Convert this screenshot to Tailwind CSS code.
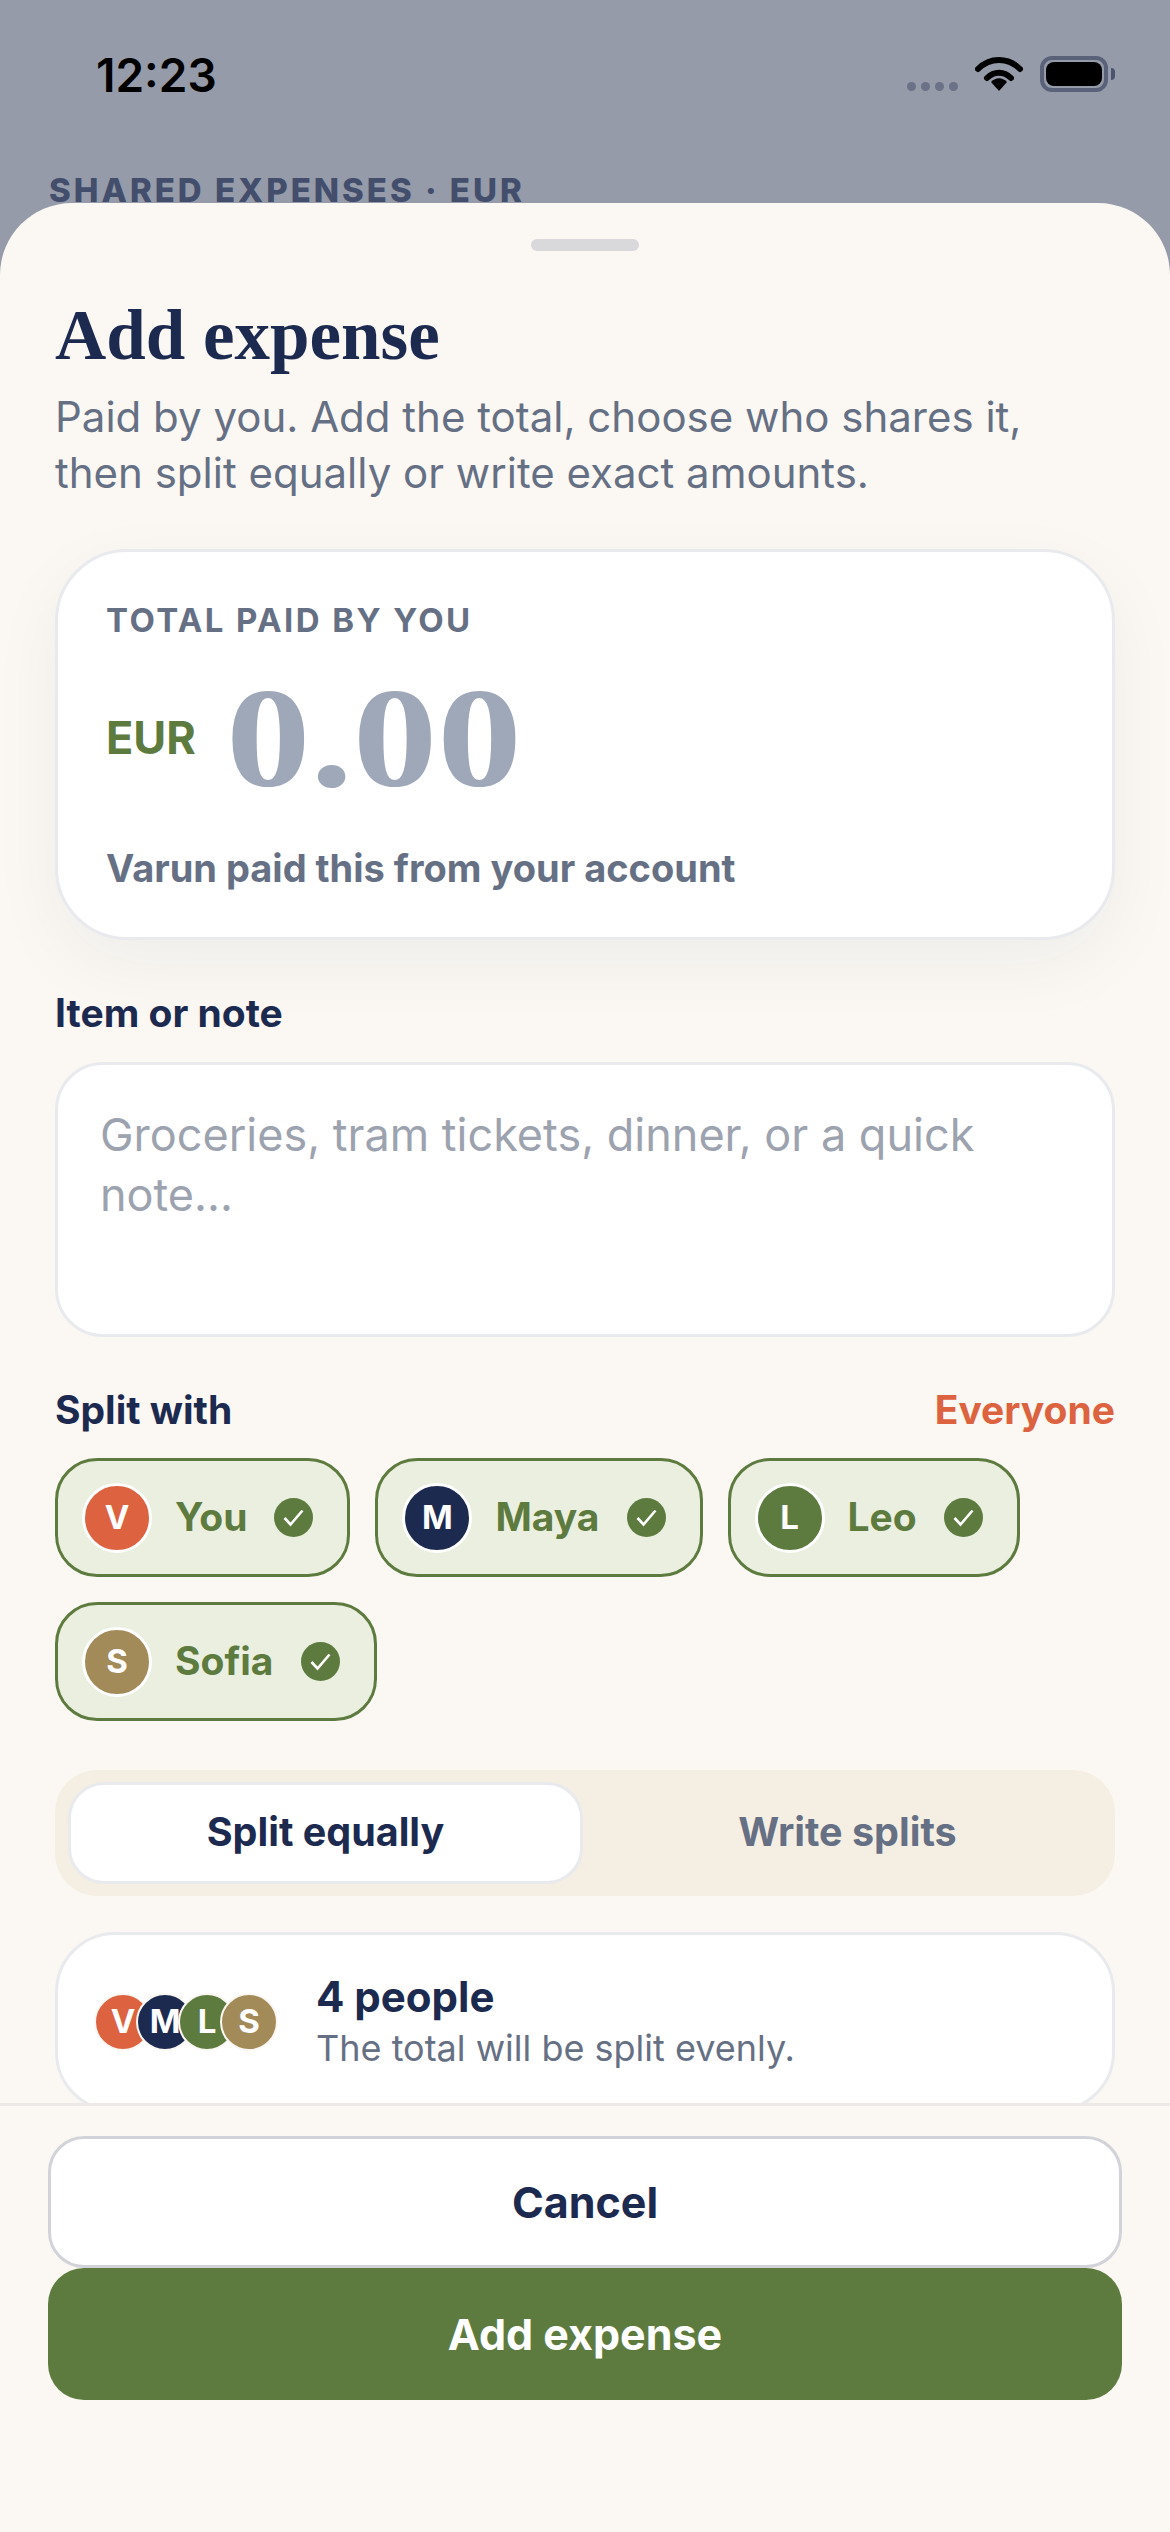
<!DOCTYPE html>
<html lang="en">
<head>
    <meta charset="UTF-8">
    <meta name="viewport" content="width=device-width, initial-scale=1.0">
    <title>Add expense</title>
    <script src="https://cdn.jsdelivr.net/npm/@tailwindcss/browser@4"></script>
</head>
<body class="bg-[#959ba8]">
<div class="relative w-[1170px] h-[2532px] overflow-hidden bg-[#959ba8] font-['Inter',sans-serif]">

    <!-- Status bar -->
    <div class="flex justify-between items-start h-[170px] pl-[96px] pr-[55px] pt-[50px]">
        <span class="mt-[2px] text-[46px] leading-[46px] font-semibold text-black">12:23</span>
        <div class="flex items-start">
            <div class="flex gap-[5px] mt-[32px]">
                <span class="w-[9px] h-[9px] rounded-full bg-[#6b7186]"></span>
                <span class="w-[9px] h-[9px] rounded-full bg-[#6b7186]"></span>
                <span class="w-[9px] h-[9px] rounded-full bg-[#6b7186]"></span>
                <span class="w-[9px] h-[9px] rounded-full bg-[#6b7186]"></span>
            </div>
            <svg class="ml-[17px] mt-[5px]" width="48" height="36" viewBox="0 0 48 36" fill="none">
                <path d="M3 14C15 2 33 2 45 14" stroke="#000" stroke-width="6" stroke-linecap="round"/>
                <path d="M12 23C19 16 29 16 36 23" stroke="#000" stroke-width="6" stroke-linecap="round"/>
                <path d="M16 27C21 22 27 22 32 27L24 36Z" fill="#000"/>
            </svg>
            <div class="ml-[17px] mt-[6px] w-[68px] h-[36px] rounded-[12px] border-[4px] border-[#5a627a] p-[2px]">
                <div class="w-full h-full rounded-[8px] bg-black"></div>
            </div>
            <div class="ml-[3px] mt-[18px] w-[4px] h-[12px] rounded-r-full bg-[#4a5470]"></div>
        </div>
    </div>

    <p class="pl-[49px] text-[33px] leading-[40px] font-extrabold tracking-[3px] text-[#434e6d]">SHARED EXPENSES · EUR</p>

    <!-- Sheet -->
    <div class="absolute left-0 right-0 top-[203px] bottom-0 flex flex-col rounded-t-[72px] bg-[#fbf8f3] overflow-hidden">
        <div class="h-[1903px] shrink-0 overflow-hidden px-[55px] border-b-[3px] border-[#ece9e6]">
            <div class="w-[108px] h-[12px] mx-auto mt-[36px] rounded-full bg-[#d9d9dc]"></div>

            <h1 class="mt-[44px] font-['Liberation_Serif',serif] text-[71px] leading-[80px] font-bold text-[#1c2a50]">Add expense</h1>
            <p class="mt-[14px] text-[42px] leading-[56px] text-[#667085]">Paid by you. Add the total, choose who shares it,<br>then split equally or write exact amounts.</p>

            <!-- Total card -->
            <div class="mt-[48px] h-[391px] rounded-[72px] border-[3px] border-[#e9eaee] bg-white px-[48px] pt-[48px] shadow-[0_24px_72px_rgba(28,42,80,0.05)]">
                <p class="text-[33px] leading-[40px] font-bold tracking-[2.4px] text-[#667085]">TOTAL PAID BY YOU</p>
                <div class="flex items-center mt-[38px] h-[120px]">
                    <span class="text-[45px] font-bold text-[#5e7b3f]">EUR</span>
                    <span class="ml-[30px] origin-left scale-x-[1.19] font-['Liberation_Serif',serif] text-[142px] leading-[120px] font-bold text-[#9fa8b9]">0.00</span>
                </div>
                <p class="mt-[46px] text-[38px] leading-[48px] font-bold text-[#667085]">Varun paid this from your account</p>
            </div>

            <p class="mt-[49px] text-[39px] leading-[48px] font-bold text-[#1c2a50]">Item or note</p>
            <div class="mt-[25px] h-[275px] rounded-[48px] border-[3px] border-[#e9eaee] bg-white pl-[42px] pr-[60px] pt-[40px] text-[45px] leading-[60px] text-[#9ca3af]">Groceries, tram tickets, dinner, or a quick note...</div>

            <div class="flex justify-between mt-[49px]">
                <span class="text-[39px] leading-[48px] font-bold text-[#1c2a50]">Split with</span>
                <span class="text-[39px] leading-[48px] font-bold text-[#dc6240]">Everyone</span>
            </div>

            <!-- Chips -->
            <div class="flex flex-wrap gap-x-[25px] gap-y-[25px] mt-[24px]">
                <div class="flex items-center h-[119px] rounded-[42px] border-[3px] border-[#5e7b3f] bg-[#eaefdf] pl-[24px] pr-[34px]">
                    <span class="flex items-center justify-center w-[70px] h-[70px] rounded-full border-[3px] border-white bg-[#dc6240] text-[33px] font-bold text-white">V</span>
                    <span class="ml-[23px] text-[39px] font-bold text-[#5e7b3f]">You</span>
                    <svg class="ml-[27px]" width="39" height="39" viewBox="0 0 39 39"><circle cx="19.5" cy="19.5" r="19.5" fill="#5e7b3f"/><path d="M10.5 20l6 6.5 12-14" fill="none" stroke="#fff" stroke-width="2.6"/></svg>
                </div>
                <div class="flex items-center h-[119px] rounded-[42px] border-[3px] border-[#5e7b3f] bg-[#eaefdf] pl-[24px] pr-[34px]">
                    <span class="flex items-center justify-center w-[70px] h-[70px] rounded-full border-[3px] border-white bg-[#1c2a50] text-[33px] font-bold text-white">M</span>
                    <span class="ml-[23px] text-[39px] font-bold text-[#5e7b3f]">Maya</span>
                    <svg class="ml-[27px]" width="39" height="39" viewBox="0 0 39 39"><circle cx="19.5" cy="19.5" r="19.5" fill="#5e7b3f"/><path d="M10.5 20l6 6.5 12-14" fill="none" stroke="#fff" stroke-width="2.6"/></svg>
                </div>
                <div class="flex items-center h-[119px] rounded-[42px] border-[3px] border-[#5e7b3f] bg-[#eaefdf] pl-[24px] pr-[34px]">
                    <span class="flex items-center justify-center w-[70px] h-[70px] rounded-full border-[3px] border-white bg-[#5e7b3f] text-[33px] font-bold text-white">L</span>
                    <span class="ml-[23px] text-[39px] font-bold text-[#5e7b3f]">Leo</span>
                    <svg class="ml-[27px]" width="39" height="39" viewBox="0 0 39 39"><circle cx="19.5" cy="19.5" r="19.5" fill="#5e7b3f"/><path d="M10.5 20l6 6.5 12-14" fill="none" stroke="#fff" stroke-width="2.6"/></svg>
                </div>
                <div class="flex items-center h-[119px] rounded-[42px] border-[3px] border-[#5e7b3f] bg-[#eaefdf] pl-[24px] pr-[34px]">
                    <span class="flex items-center justify-center w-[70px] h-[70px] rounded-full border-[3px] border-white bg-[#a38a59] text-[33px] font-bold text-white">S</span>
                    <span class="ml-[23px] text-[39px] font-bold text-[#5e7b3f]">Sofia</span>
                    <svg class="ml-[27px]" width="39" height="39" viewBox="0 0 39 39"><circle cx="19.5" cy="19.5" r="19.5" fill="#5e7b3f"/><path d="M10.5 20l6 6.5 12-14" fill="none" stroke="#fff" stroke-width="2.6"/></svg>
                </div>
            </div>

            <!-- Split mode -->
            <div class="flex gap-[10px] mt-[49px] h-[126px] rounded-[42px] bg-[#f5eee2] px-[13px] py-[12px]">
                <div class="flex flex-1 items-center justify-center rounded-[36px] border-[3px] border-[#e9eaee] bg-white text-[39.5px] font-bold text-[#1c2a50]">Split equally</div>
                <div class="flex flex-1 items-center justify-center text-[39.5px] font-bold text-[#667085]">Write splits</div>
            </div>

            <!-- Summary -->
            <div class="flex items-center mt-[36px] h-[180px] rounded-[60px] border-[3px] border-[#e9eaee] bg-white pl-[36px]">
                <div class="flex w-[184px] shrink-0">
                    <span class="flex items-center justify-center shrink-0 w-[58px] h-[58px] rounded-full border-[2px] border-[#fbf8f3] bg-[#dc6240] text-[33px] font-bold text-white">V</span>
                    <span class="flex items-center justify-center shrink-0 w-[58px] h-[58px] ml-[-16px] rounded-full border-[2px] border-[#fbf8f3] bg-[#1c2a50] text-[33px] font-bold text-white">M</span>
                    <span class="flex items-center justify-center shrink-0 w-[58px] h-[58px] ml-[-16px] rounded-full border-[2px] border-[#fbf8f3] bg-[#5e7b3f] text-[33px] font-bold text-white">L</span>
                    <span class="flex items-center justify-center shrink-0 w-[58px] h-[58px] ml-[-16px] rounded-full border-[2px] border-[#fbf8f3] bg-[#a38a59] text-[33px] font-bold text-white">S</span>
                </div>
                <div class="ml-[38px]">
                    <p class="text-[42px] leading-[52px] font-bold text-[#1c2a50]">4 people</p>
                    <p class="text-[36px] leading-[50px] text-[#667085]">The total will be split evenly.</p>
                </div>
            </div>
        </div>

        <!-- Footer actions -->
        <div class="flex flex-col px-[48px] pt-[30px]">
            <div class="flex items-center justify-center h-[132px] rounded-[36px] border-[3px] border-[#d2d3d9] bg-white text-[43px] font-bold text-[#1c2a50]">Cancel</div>
            <div class="flex items-center justify-center h-[132px] rounded-[36px] bg-[#5e7b3f] text-[43px] font-bold text-white">Add expense</div>
        </div>
    </div>
</div>
</body>
</html>
